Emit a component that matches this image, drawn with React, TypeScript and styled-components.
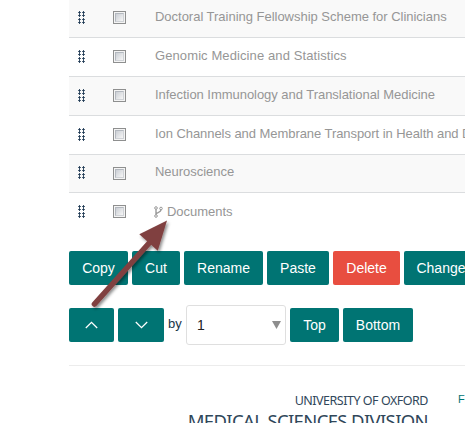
import React from "react";
import styled, { createGlobalStyle } from "styled-components";

const GlobalStyle = createGlobalStyle`
  *, *::before { box-sizing: border-box; }
  html, body { margin: 0; height: 100%; overflow: hidden; background: #fff; }
  body { font-family: "Liberation Sans", Arial, sans-serif; }
`;

const Page = styled.main`
  position: relative;
  width: 465px;
  height: 423px;
  padding-left: 69px;
  overflow: hidden;
  background: #fff;
`;

const List = styled.div`
  width: 396px;
  overflow: hidden;
`;

const Row = styled.div<{ $height: number; $shaded?: boolean; $last?: boolean }>`
  display: flex;
  align-items: flex-start;
  height: ${(p) => p.$height}px;
  background: ${(p) => (p.$shaded ? "#f9f9f9" : "#fff")};
  border-bottom: ${(p) => (p.$last ? "0" : "1px solid #dbdddf")};
`;

const Handle = styled.svg<{ $top: number }>`
  flex: none;
  width: 7px;
  height: 13px;
  margin: ${(p) => p.$top}px 0 0 9px;
`;

const Checkbox = styled.span<{ $top: number }>`
  flex: none;
  width: 13px;
  height: 13px;
  margin: ${(p) => p.$top}px 0 0 28px;
  padding: 1px;
  border: 1px solid #8e8f8f;
  background: #f4f4f4;

  &::before {
    content: "";
    display: block;
    width: 9px;
    height: 9px;
    border: 1px solid;
    border-color: #b3b8bf #cfd2d6 #cfd2d6 #b3b8bf;
    background: linear-gradient(135deg, #cbcfd5, #f6f6f6);
  }
`;

const Label = styled.span<{ $top: number; $spacing: number }>`
  flex: none;
  display: flex;
  margin: ${(p) => p.$top}px 0 0 29px;
  font-size: 13px;
  line-height: 16px;
  letter-spacing: ${(p) => p.$spacing}px;
  white-space: nowrap;
  color: #969696;
`;

const BranchIcon = styled.svg`
  flex: none;
  width: 9px;
  height: 12px;
  margin: 2px 4px 0 -1px;
`;

const Toolbar = styled.div<{ $height: number; $top: number }>`
  display: flex;
  align-items: center;
  gap: 4px;
  width: 396px;
  height: ${(p) => p.$height}px;
  margin-top: ${(p) => p.$top}px;
  overflow: hidden;
`;

const Button = styled.button<{ $width: number; $danger?: boolean }>`
  flex: none;
  display: flex;
  align-items: center;
  justify-content: center;
  width: ${(p) => p.$width}px;
  height: 34px;
  padding: 0;
  border: 0;
  border-radius: 2px;
  background: ${(p) => (p.$danger ? "#e84e40" : "#007473")};
  color: #fff;
  font: 14px/20px "Liberation Sans", Arial, sans-serif;
`;

const By = styled.span`
  flex: none;
  width: 14px;
  font-size: 13px;
  line-height: 16px;
  color: #1c3547;
  margin-top: -3px;
`;

const Select = styled.div`
  flex: none;
  display: flex;
  align-items: center;
  justify-content: space-between;
  width: 100px;
  height: 40px;
  padding: 0 4px 0 10px;
  border: 1px solid #dfdfdf;
  border-radius: 3px;
  font-size: 14px;
  color: #222;
`;

const Footer = styled.footer`
  display: flex;
  align-items: flex-start;
  width: 396px;
  margin-top: 20px;
  border-top: 1px solid #ececec;
`;

const Brand = styled.div`
  flex: none;
  display: flex;
  flex-direction: column;
  align-items: flex-end;
  width: 359px;
  padding-top: 26px;
  font-family: "Noto Sans", "Open Sans", sans-serif;
  color: #30475a;
  white-space: nowrap;
`;

const University = styled.span`
  font-size: 12.5px;
  line-height: 18px;
  letter-spacing: -0.48px;
`;

const Division = styled.span`
  font-size: 18.5px;
  line-height: 22px;
  letter-spacing: -0.64px;
`;

const FooterLink = styled.a`
  flex: none;
  margin: 27px 0 0 30px;
  font-size: 11px;
  line-height: 13px;
  color: #007473;
  white-space: nowrap;
`;

const Arrow = styled.svg`
  position: absolute;
  left: 80px;
  top: 210px;
  width: 100px;
  height: 110px;
  pointer-events: none;
`;

const rows = [
  { label: "Doctoral Training Fellowship Scheme for Clinicians", height: 38, top: 11, text: 9, spacing: -0.02 },
  { label: "Genomic Medicine and Statistics", height: 39, top: 12, text: 10, spacing: 0.1 },
  { label: "Infection Immunology and Translational Medicine", height: 39, top: 12, text: 10, spacing: -0.04 },
  { label: "Ion Channels and Membrane Transport in Health and D", height: 39, top: 12, text: 10, spacing: -0.06 },
  { label: "Neuroscience", height: 38, top: 12, text: 9, spacing: -0.03 },
  { label: "Documents", height: 38, top: 12, text: 11, spacing: -0.03, branch: true },
];

const actions = [
  { label: "Copy", width: 59 },
  { label: "Cut", width: 48 },
  { label: "Rename", width: 79 },
  { label: "Paste", width: 62 },
  { label: "Delete", width: 67, danger: true },
  { label: "Change", width: 74 },
];

function DragHandle({ top }: { top: number }) {
  return (
    <Handle $top={top} viewBox="0 0 7 13">
      {[0, 3, 7, 10].map((y) =>
        [0, 4].map((x) => (
          <g key={`${x}-${y}`} fill="#17324e">
            <rect x={x} y={y + 1} width="3" height="1" opacity="0.75" />
            <rect x={x + 1} y={y} width="1" height="3" opacity="0.85" />
          </g>
        ))
      )}
    </Handle>
  );
}

function Chevron({ down }: { down?: boolean }) {
  return (
    <svg width="13" height="8" viewBox="0 0 13 8">
      <path d={down ? "M.8 1 6.5 6.6 12.2 1" : "M.8 7 6.5 1.4 12.2 7"} fill="none" stroke="#fff" strokeWidth="1.3" />
    </svg>
  );
}

export default function App() {
  return (
    <>
      <GlobalStyle />
      <Page>
        <List>
          {rows.map((row, i) => (
            <Row key={row.label} $height={row.height} $shaded={i % 2 === 0 && i < 5} $last={i === 5}>
              <DragHandle top={i === 4 ? 11 : row.top} />
              <Checkbox $top={row.top} role="checkbox" aria-checked="false" />
              <Label $top={row.text} $spacing={row.spacing}>
                {row.branch && (
                  <BranchIcon viewBox="0 0 9 12">
                    <g fill="none" stroke="#999" strokeWidth="1">
                      <circle cx="2" cy="2" r="1.3" />
                      <circle cx="2" cy="10" r="1.3" />
                      <circle cx="7" cy="2.5" r="1.3" />
                      <path d="M2 3.3v5.4M7 3.8C7 7 2.3 5.6 2 8.7" strokeWidth="1.4" />
                    </g>
                  </BranchIcon>
                )}
                {row.label}
              </Label>
            </Row>
          ))}
        </List>
        <Toolbar $height={34} $top={20}>
          {actions.map((a) => (
            <Button key={a.label} $width={a.width} $danger={a.danger}>{a.label}</Button>
          ))}
        </Toolbar>
        <Toolbar $height={40} $top={20}>
          <Button $width={45} aria-label="Move up"><Chevron /></Button>
          <Button $width={46} aria-label="Move down"><Chevron down /></Button>
          <By>by</By>
          <Select>
            1
            <svg width="9" height="8" viewBox="0 0 9 8"><path d="M0 0h9L4.5 8z" fill="#8e8e8e" /></svg>
          </Select>
          <Button $width={49}>Top</Button>
          <Button $width={70}>Bottom</Button>
        </Toolbar>
        <Footer>
          <Brand>
            <University>UNIVERSITY OF OXFORD</University>
            <Division>MEDICAL SCIENCES DIVISION</Division>
          </Brand>
          <FooterLink>Fr</FooterLink>
        </Footer>
        <Arrow viewBox="80 210 100 110">
          <defs>
            <filter id="shade" x="-20%" y="-20%" width="150%" height="150%">
              <feDropShadow dx="1.5" dy="2" stdDeviation="1.5" floodColor="#000" floodOpacity="0.45" />
            </filter>
          </defs>
          <g filter="url(#shade)" fill="#804040">
            <path d="M94.5 304 151 241" stroke="#804040" strokeWidth="5.6" strokeLinecap="round" />
            <path d="M167 220.5 139.3 234.3 157.8 250.8z" />
          </g>
        </Arrow>
      </Page>
    </>
  );
}
